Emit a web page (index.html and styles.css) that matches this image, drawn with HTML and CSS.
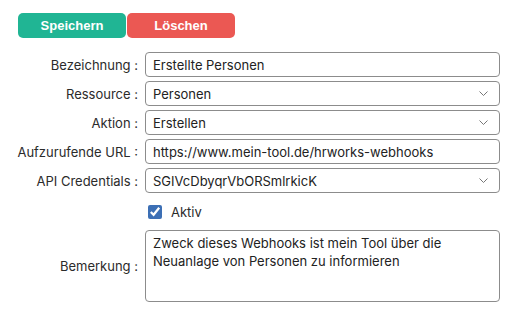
FILE: index.html
```html
<!DOCTYPE html>
<html>
<head>
  <meta charset="UTF-8">
  <title>Webhook bearbeiten</title>
  <link rel="stylesheet" href="styles.css">
</head>
<body>
  <div class="toolbar">
    <button class="btn btn-save">Speichern</button>
    <button class="btn btn-delete">Löschen</button>
  </div>

  <form class="webhook-form">
    <label class="form-label" for="name">Bezeichnung :</label>
    <input class="form-input" id="name" type="text" value="Erstellte Personen">

    <label class="form-label" for="resource">Ressource :</label>
    <div class="select-wrap">
      <select class="form-input" id="resource">
        <option selected>Personen</option>
      </select>
      <svg class="chevron" width="9" height="5" viewBox="0 0 9 5"><path d="M0.5 0.5 L4.5 4.5 L8.5 0.5" fill="none" stroke="#777" stroke-width="1"/></svg>
    </div>

    <label class="form-label" for="action">Aktion :</label>
    <div class="select-wrap">
      <select class="form-input" id="action">
        <option selected>Erstellen</option>
      </select>
      <svg class="chevron" width="9" height="5" viewBox="0 0 9 5"><path d="M0.5 0.5 L4.5 4.5 L8.5 0.5" fill="none" stroke="#777" stroke-width="1"/></svg>
    </div>

    <label class="form-label" for="url">Aufzurufende URL :</label>
    <input class="form-input" id="url" type="text" value="https://www.mein-tool.de/hrworks-webhooks">

    <label class="form-label" for="credentials">API Credentials :</label>
    <div class="select-wrap">
      <select class="form-input" id="credentials">
        <option selected>SGIVcDbyqrVbORSmlrkicK</option>
      </select>
      <svg class="chevron" width="9" height="5" viewBox="0 0 9 5"><path d="M0.5 0.5 L4.5 4.5 L8.5 0.5" fill="none" stroke="#777" stroke-width="1"/></svg>
    </div>

    <span></span>
    <label class="check-row">
      <input type="checkbox" checked>
      <span>Aktiv</span>
    </label>

    <label class="form-label" for="note">Bemerkung :</label>
    <textarea class="form-input form-textarea" id="note">Zweck dieses Webhooks ist mein Tool über die Neuanlage von Personen zu informieren</textarea>
  </form>
</body>
</html>
```

FILE: styles.css
```css
body {
  margin: 0;
  background: #fff;
  color: #222;
  font-family: Inter, "Noto Sans", sans-serif;
  font-size: 13px;
}

.toolbar {
  display: flex;
  gap: 1px;
  padding: 13px 0 0 18px;
}

.btn {
  width: 108px;
  height: 25px;
  border: none;
  border-radius: 5px;
  color: #fff;
  font-family: "Liberation Sans", Arial, sans-serif;
  font-weight: bold;
  font-size: 13px;
  cursor: pointer;
}

.btn-save {
  background: #20b594;
}

.btn-delete {
  background: #eb5853;
}

.webhook-form {
  display: grid;
  grid-template-columns: 136px 355px;
  column-gap: 9px;
  row-gap: 4px;
  align-items: center;
  margin-top: 14px;
}

.form-label {
  text-align: right;
  padding-right: 0;
  margin-right: -2px;
  color: #2b2b2b;
}

.form-input {
  box-sizing: border-box;
  width: 100%;
  height: 25px;
  margin: 0;
  padding: 0 7px;
  border: 1px solid #8c8c8c;
  border-radius: 4px;
  background: #fff;
  color: #222;
  font-family: Inter, "Noto Sans", sans-serif;
  font-size: 13px;
}

.select-wrap {
  position: relative;
}

.select-wrap select {
  appearance: none;
  -webkit-appearance: none;
}

.chevron {
  position: absolute;
  right: 12px;
  top: 10px;
  pointer-events: none;
}

.check-row {
  display: flex;
  align-items: center;
  gap: 9px;
  height: 29px;
  padding-left: 3px;
  color: #2b2b2b;
}

.check-row input {
  width: 14px;
  height: 14px;
  margin: 0;
  accent-color: #3c6fb5;
}

.form-textarea {
  height: 72px;
  padding: 3px 7px;
  line-height: 18px;
  resize: none;
}
```
